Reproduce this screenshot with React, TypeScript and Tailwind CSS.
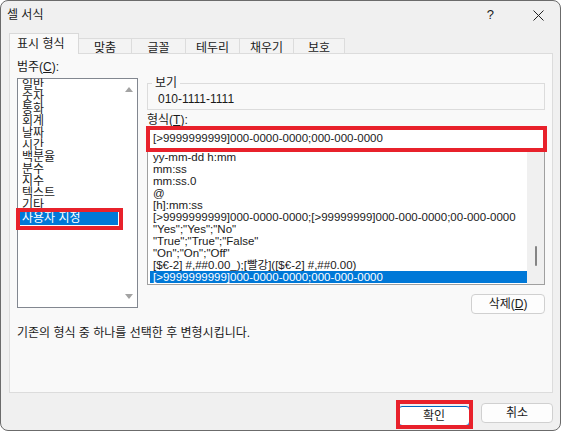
import React from 'react'

const font = { fontFamily: '"Liberation Sans", "Noto Sans CJK KR", sans-serif' }

const tabs = [
  { label: '표시 형식', w: 'w-[70px]' },
  { label: '맞춤', w: 'w-[53px]' },
  { label: '글꼴', w: 'w-[54px]' },
  { label: '테두리', w: 'w-[54px]' },
  { label: '채우기', w: 'w-[54px]' },
  { label: '보호', w: 'w-[51px]' },
]

const categories = ['일반', '숫자', '통화', '회계', '날짜', '시간', '백분율', '분수', '지수', '텍스트', '기타']

const formats = [
  'yy-mm-dd h:mm',
  'mm:ss',
  'mm:ss.0',
  '@',
  '[h]:mm:ss',
  '[>9999999999]000-0000-0000;[>99999999]000-000-0000;00-000-0000',
  '"Yes";"Yes";"No"',
  '"True";"True";"False"',
  '"On";"On";"Off"',
  '[$€-2] #,##0.00_);[빨강]([$€-2] #,##0.00)',
]

const currentFormat = '[>9999999999]000-0000-0000;000-000-0000'

function Arrow({ up }: { up?: boolean }) {
  return (
    <svg width="8" height="5" viewBox="0 0 8 5">
      <path d={up ? 'M0 5 L4 0 L8 5 Z' : 'M0 0 L8 0 L4 5 Z'} fill="#a3a3a3" />
    </svg>
  )
}

export default function App() {
  return (
    <div className="w-[563px] h-[432px] bg-white text-[#1a1a1a]" style={font}>
      <div className="w-[561px] h-[431px] border border-[#6b6b6b] rounded-[8px] bg-[#f0f0f0] overflow-hidden flex flex-col">
        {/* 제목 표시줄 */}
        <div className="h-[32px] flex items-start pt-[6px] pl-[6px] text-[12px] leading-[16px]">
          <span>셀 서식</span>
          <span className="ml-auto mr-[39px] text-[13px]">?</span>
          <svg width="11" height="11" viewBox="0 0 11 11" className="mt-[3px] mr-[16px]">
            <path d="M0.5 0.5 L10.5 10.5 M10.5 0.5 L0.5 10.5" stroke="#222" strokeWidth="1" />
          </svg>
        </div>

        <div className="pl-[8px] pr-[7px] flex flex-col">
          {/* 탭 */}
          <div className="h-[20px] flex items-end relative z-10">
            {tabs.map((t, i) =>
              i === 0 ? (
                <div
                  key={t.label}
                  className={`${t.w} h-[21px] -mb-[1px] bg-[#f9f9f9] border border-b-0 border-[#d9d9d9] text-[12px] leading-[18px] pl-[7px] pt-[1px]`}
                >
                  {t.label}
                </div>
              ) : (
                <div
                  key={t.label}
                  className={`${t.w} h-[15px] border-t border-r border-[#dcdcdc] bg-[#f3f3f3] text-[12px] leading-[16px] text-center pt-[1px]`}
                >
                  {t.label}
                </div>
              )
            )}
          </div>

          {/* 탭 패널 */}
          <div className="h-[340px] bg-[#f9f9f9] border border-[#dcdcdc] flex flex-col">
            <div className="flex items-start pl-[7px]">
              {/* 범주 */}
              <div className="w-[121px] pt-[5px] flex flex-col">
                <div className="h-[16px] text-[12px] leading-[16px]">
                  범주(<span className="underline">C</span>):
                </div>
                <div className="mt-[3px] h-[230px] bg-white border border-[#828790] flex">
                  <div className="flex-1 flex flex-col pl-[2px] text-[12px] leading-[12px]">
                    {categories.map((c) => (
                      <div key={c} className="h-[12px] pl-[2px]">
                        {c}
                      </div>
                    ))}
                    <div className="relative h-[14px] w-[98px] bg-[#0078d7] text-white leading-[14px] pl-[2px]">
                      사용자 지정
                      <div className="absolute -left-[4px] -top-[3px] -right-[5px] -bottom-[5px] border-[4px] border-[#e8212b]" />
                    </div>
                  </div>
                  <div className="w-[17px] flex flex-col items-center justify-between py-[8px]">
                    <Arrow up />
                    <Arrow />
                  </div>
                </div>
              </div>

              {/* 오른쪽 */}
              <div className="ml-[9px] w-[398px] pt-[22px] flex flex-col">
                <fieldset className="border border-[#dcdcdc]">
                  <legend className="ml-[4px] px-[3px] text-[12px] leading-[14px]">보기</legend>
                  <div className="h-[19px] pl-[10px] text-[12px] leading-[19px]">010-1111-1111</div>
                </fieldset>
                <div className="mt-[3px] h-[14px] text-[12px] leading-[14px]">
                  형식(<span className="underline">T</span>):
                </div>
                <div className="relative mt-[1px] h-[21px] bg-white border border-[#7a7a7a] pl-[5px] text-[11.5px] leading-[19px]">
                  {currentFormat}
                  <div className="absolute -left-[2px] -top-[3px] -right-[3px] -bottom-[4px] border-[4px] border-[#e8212b]" />
                </div>
                <div className="mt-[1px] h-[135px] bg-white border border-[#a0a0a0] flex overflow-hidden">
                  <div className="flex-1 pl-[1px] text-[11.5px] leading-[12px] whitespace-nowrap overflow-hidden">
                    {formats.map((f) => (
                      <div key={f} className="h-[12px] pl-[4px]">
                        {f}
                      </div>
                    ))}
                    <div className="h-[12px] ml-[1px] pl-[3px] bg-[#0078d7] text-white">{currentFormat}</div>
                  </div>
                  <div className="w-[17px] bg-[#f0f0f0] flex flex-col items-center">
                    <div className="mt-[95px] w-[2px] h-[20px] bg-[#858585] rounded-full" />
                  </div>
                </div>
                <button className="self-end mt-[9px] w-[74px] h-[20px] bg-[#fdfdfd] border border-[#d0d0d0] rounded-[4px] text-[12px] leading-[18px]">
                  삭제(<span className="underline">D</span>)
                </button>
              </div>
            </div>
            <div className="mt-[11px] pl-[7px] text-[12px] leading-[16px]">
              기존의 형식 중 하나를 선택한 후 변형시킵니다.
            </div>
          </div>

          {/* 확인 / 취소 */}
          <div className="mt-[10px] flex justify-end gap-[11px]">
            <div className="relative">
              <button className="w-[72px] h-[20px] bg-white border border-[#0067c0] rounded-[4px] text-[12px] leading-[18px]">
                확인
              </button>
              <div className="absolute -left-[2px] -top-[3px] -right-[3px] -bottom-[2px] border-[4px] border-[#e8212b]" />
            </div>
            <button className="w-[72px] h-[20px] bg-[#fdfdfd] border border-[#d0d0d0] rounded-[4px] text-[12px] leading-[18px]">
              취소
            </button>
          </div>
        </div>
      </div>
    </div>
  )
}
